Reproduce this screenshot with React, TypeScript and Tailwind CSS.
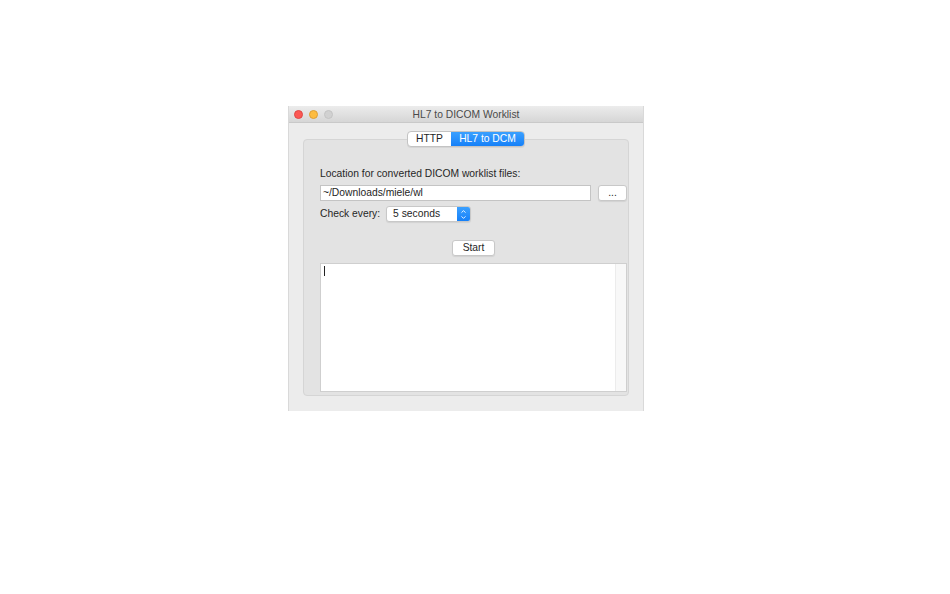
import { ChevronDown, ChevronUp } from "lucide-react";

const font = { fontFamily: '"Liberation Sans", Arial, sans-serif' };

function TrafficLights() {
  return (
    <div className="flex items-center gap-[6px] pl-[5px]">
      <span className="h-[9px] w-[9px] rounded-full bg-[#fc5753] border border-[#df4744]" />
      <span className="h-[9px] w-[9px] rounded-full bg-[#fdbc40] border border-[#de9f34]" />
      <span className="h-[9px] w-[9px] rounded-full bg-[#d1d1d1] border border-[#c4c4c4]" />
    </div>
  );
}

function Tabs() {
  return (
    <div className="relative z-10 flex justify-center">
      <div className="flex h-[16px] overflow-hidden rounded-[4px] border border-[#c3c3c3] bg-white text-[10.3px] leading-[14px] shadow-[0_1px_0_rgba(0,0,0,0.06)]">
        <div className="w-[43px] text-center text-[#1e1e1e]">HTTP</div>
        <div className="w-[73px] bg-gradient-to-b from-[#3aa0ff] to-[#1580f8] text-center text-white">
          HL7 to DCM
        </div>
      </div>
    </div>
  );
}

function MacButton({ children, className }: { children: React.ReactNode; className: string }) {
  return (
    <button
      className={
        "h-[16px] rounded-[3px] border border-[#c8c8c8] bg-white text-[10.3px] leading-[14px] text-[#262626] shadow-[0_1px_1px_rgba(0,0,0,0.08)] " +
        className
      }
    >
      {children}
    </button>
  );
}

export default function App() {
  return (
    <div className="relative h-[594px] w-[950px] bg-white" style={font}>
      <div className="absolute left-[288px] top-[106px] flex h-[305px] w-[356px] flex-col border-x border-[#d9d9d9] bg-[#ececec]">
        <div className="relative flex h-[17px] items-center border-b border-[#c9c9c9] bg-gradient-to-b from-[#ececec] to-[#d6d6d6]">
          <TrafficLights />
          <div className="absolute inset-0 text-center text-[10.3px] leading-[17px] text-[#4a4a4a]">
            HL7 to DICOM Worklist
          </div>
        </div>

        <div className="flex flex-1 flex-col px-[14px] pb-[15px] pt-[8px]">
          <Tabs />
          <div className="-mt-[8px] flex flex-1 flex-col rounded-[4px] border border-[#d5d5d5] bg-[#e3e3e3] pb-[3px] pl-[16px] pr-[1px] pt-[27px] text-[10.3px] text-[#262626]">
            <div className="leading-[14px]">Location for converted DICOM worklist files:</div>

            <div className="mt-[4px] flex items-center gap-[7px]">
              <div className="h-[16px] flex-1 border border-[#c4c4c4] bg-white pl-[2px] leading-[14px] text-[#1e1e1e]">
                ~/Downloads/miele/wl
              </div>
              <MacButton className="w-[29px] text-[#8a8a8a]">...</MacButton>
            </div>

            <div className="mt-[5px] flex items-center gap-[6px]">
              <span className="leading-[14px]">Check every:</span>
              <div className="flex h-[16px] w-[85px] overflow-hidden rounded-[3px] border border-[#c8c8c8] bg-white shadow-[0_1px_1px_rgba(0,0,0,0.08)]">
                <span className="flex-1 pl-[6px] leading-[14px] text-[#1e1e1e]">5 seconds</span>
                <span className="flex w-[13px] flex-col items-center justify-center bg-gradient-to-b from-[#3aa0ff] to-[#1580f8] text-white">
                  <ChevronUp size={7} strokeWidth={3} className="-mb-[1px]" />
                  <ChevronDown size={7} strokeWidth={3} />
                </span>
              </div>
            </div>

            <div className="mt-[18px] flex justify-center">
              <MacButton className="w-[43px]">Start</MacButton>
            </div>

            <div className="mt-[7px] flex flex-1 border border-[#cfcfcf] bg-white">
              <div className="flex-1 pl-[3px] pt-[2px]">
                <div className="h-[10px] w-px bg-[#222]" />
              </div>
              <div className="w-[11px] border-l border-[#ececec] bg-[#f8f8f8]" />
            </div>
          </div>
        </div>
      </div>
    </div>
  );
}
